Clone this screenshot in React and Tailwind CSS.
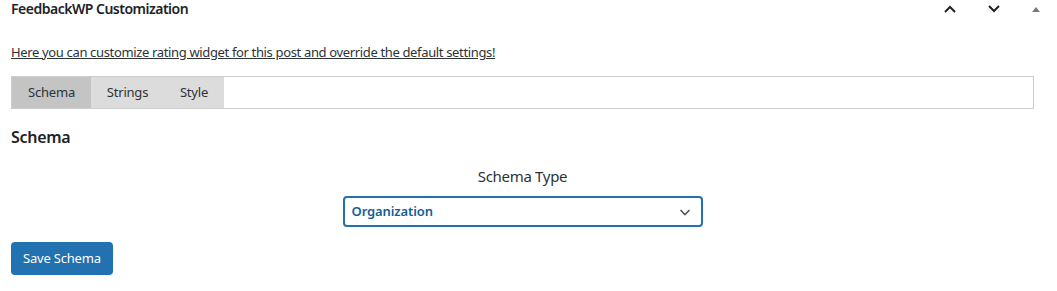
export default function App() {
    return (
        <div className="min-h-[291px] w-[1057px] bg-white font-['Noto_Sans',sans-serif] text-[#1d2327]">
            <div className="flex h-[17px] items-center justify-between pl-[11px] pr-[16px]">
                <h2 className="text-[14px] font-semibold leading-none tracking-[-0.5px] text-[#1d2327]">
                    FeedbackWP Customization
                </h2>
                <div className="flex items-center">
                    <svg width="14" height="14" viewBox="0 0 14 14" className="mr-[30px]">
                        <path d="M2 10 L7 5 L12 10" fill="none" stroke="#1d2327" strokeWidth="2" />
                    </svg>
                    <svg width="14" height="14" viewBox="0 0 14 14" className="mr-[30px]">
                        <path d="M2 4 L7 9 L12 4" fill="none" stroke="#1d2327" strokeWidth="2" />
                    </svg>
                    <svg width="10" height="10" viewBox="0 0 10 10">
                        <path d="M1 8 L5 3 L9 8 Z" fill="#787c82" />
                    </svg>
                </div>
            </div>

            <div className="w-[1034px] pl-[11px]">
                <p className="mt-[27px] text-[13px] leading-[17px] tracking-[-0.35px]">
                    <a href="#" className="text-[#2c3338] underline">
                        Here you can customize rating widget for this post and override the default settings!
                    </a>
                </p>

                <div className="mt-[15px] flex h-[33px] w-[1023px] border border-[#cccccc]">
                    <button className="w-[79px] bg-[#c4c4c4] text-[13px] tracking-[-0.2px] text-[#2c3338]">Schema</button>
                    <button className="w-[73px] bg-[#dcdcdc] text-[13px] tracking-[-0.2px] text-[#2c3338]">Strings</button>
                    <button className="w-[60px] bg-[#dcdcdc] text-[13px] tracking-[-0.2px] text-[#2c3338]">Style</button>
                </div>

                <h3 className="mt-[17px] text-[16px] font-semibold leading-[22px] tracking-[-0.3px]">Schema</h3>

                <div className="mt-[18px] flex flex-col items-center">
                    <label className="text-[15px] leading-[20px] tracking-[-0.3px] text-[#2c3338]">Schema Type</label>
                    <div className="mt-[10px] flex h-[31px] w-[360px] items-center justify-between rounded-[4px] border-2 border-[#2271b1] pl-[7px] pr-[9px]">
                        <span className="text-[13px] font-semibold tracking-[-0.1px] text-[#135e96]">Organization</span>
                        <svg width="14" height="14" viewBox="0 0 14 14">
                            <path d="M2.5 5 L7 9.5 L11.5 5" fill="none" stroke="#50575e" strokeWidth="1.6" />
                        </svg>
                    </div>
                </div>

                <button className="mt-[15px] h-[33px] rounded-[4px] bg-[#2271b1] px-[12px] text-[13px] tracking-[-0.2px] text-white">
                    Save Schema
                </button>
            </div>
        </div>
    );
}
